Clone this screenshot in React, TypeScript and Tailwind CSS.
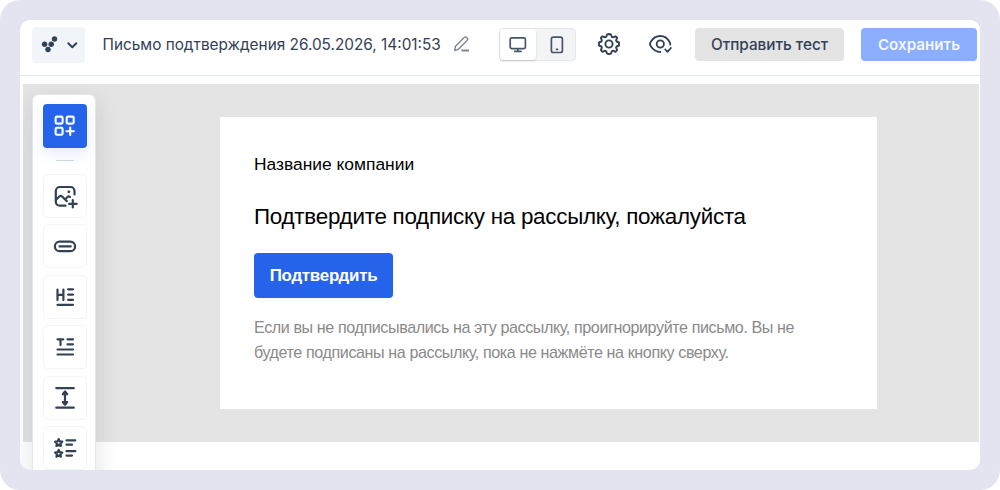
import type { ReactNode } from 'react'

interface ToolProps {
  label: string
  className?: string
  children: ReactNode
}

function Tool({ label, className = '', children }: ToolProps) {
  return (
    <button
      type="button"
      aria-label={label}
      className={`h-11 w-11 shrink-0 rounded-[5px] border border-[#f1f5f9] bg-white text-[#334155] ${className}`}
    >
      <svg
        viewBox="0.5 0.5 42 42"
        className="h-full w-full"
        fill="none"
        stroke="currentColor"
        strokeWidth="2.2"
        strokeLinecap="round"
        strokeLinejoin="round"
      >
        {children}
      </svg>
    </button>
  )
}

const star =
  'M0 -3.6 L1.1 -1.3 L3.6 -1 L1.8 0.8 L2.2 3.2 L0 2.1 L-2.2 3.2 L-1.8 0.8 L-3.6 -1 L-1.1 -1.3 Z'

function Sidebar() {
  return (
    <aside className="flex h-[400px] w-16 shrink-0 flex-col items-center rounded-t-[7px] border border-[#e2e8f0] bg-white pl-px pt-[9px] shadow-[0_8px_24px_rgba(15,23,42,0.12)]">
      <button
        type="button"
        aria-label="Блоки"
        className="h-11 w-11 shrink-0 rounded-[4px] bg-[#2563eb] text-white shadow-[0_6px_14px_rgba(37,99,235,0.12)]"
      >
        <svg
          viewBox="0 0 44 44"
          className="h-full w-full"
          fill="none"
          stroke="currentColor"
          strokeWidth="2.1"
          strokeLinecap="round"
        >
          <rect x="12.6" y="12.6" width="7" height="7" rx="1.4" />
          <rect x="23.7" y="12.6" width="7" height="7" rx="1.4" />
          <rect x="12.6" y="23.8" width="7" height="7" rx="1.4" />
          <path d="M27.2 23.6v7.4M23.5 27.3h7.4" />
        </svg>
      </button>
      <div className="mt-3 h-px w-[18px] shrink-0 bg-[#cbd5e1]" />

      <Tool label="Изображение" className="mt-[13px]">
        <path d="M31 20v-3.500a4 4 0 0 0-4-4H16.300a4 4 0 0 0-4 4v10.700a4 4 0 0 0 4 4H22" />
        <path d="M12.500 25.300l3.300-3.300a2 2 0 0 1 2.800 0l4.800 4.600M23 23.500l1-1a2 2 0 0 1 2.500-.2" />
        <path d="M25.300 17.300h.1" strokeWidth="2.800" />
        <path d="M29.300 25.500v7.500M25.500 29.300h7.700" />
      </Tool>
      <Tool label="Кнопка" className="mt-1.5">
        <rect x="11.400" y="17.200" width="20.200" height="9.400" rx="4.700" />
        <path d="M16 21.900h11.200" />
      </Tool>
      <Tool label="Заголовок" className="mt-[7px]">
        <path d="M14 14v10.600M19.900 14v10.600M14 19.300h5.900" />
        <path d="M24.600 13.800h4.900M24.600 19.100h4.900M24.600 24.300h4.900M14 29.300h15.500" />
      </Tool>
      <Tool label="Текст" className="mt-1.5">
        <path d="M14 13.800h5.800M17 13.800v5.800" />
        <path d="M24 13.800h5.500M24 18.800h5.500M14 24h15.500M14 29h15.500" />
      </Tool>
      <Tool label="Отступ" className="mt-[7px]">
        <path d="M12.800 11.700h17.500M12.800 31.200h17.500M21.500 16v11" />
        <path
          fill="currentColor"
          d="M21.500 15l-2.200 2.600h4.400zM21.500 28.200l-2.200-2.600h4.400z"
        />
      </Tool>
      <Tool label="Список" className="mt-1.5">
        <path transform="translate(15.200 16.200)" d={star} />
        <path transform="translate(15.200 27)" d={star} />
        <path d="M23 13.800h8.800M23 18.200h5.500M23 24.700h8.800M23 29.100h5.500" />
      </Tool>
    </aside>
  )
}

function Header() {
  return (
    <header className="flex h-14 items-start border-b border-[#e2e8f0] pl-3 pt-[7px] font-['Inter',sans-serif] text-[#334155]">
      <button
        type="button"
        aria-label="Меню"
        className="h-9 w-[53px] shrink-0 rounded-[4px] bg-[#f1f5f9]"
      >
        <svg viewBox="0 0 53 36" className="h-full w-full">
          <g fill="currentColor">
            <circle cx="12.600" cy="17.300" r="2.700" />
            <circle cx="19.200" cy="17.300" r="2.700" />
            <circle cx="22.500" cy="12" r="2.700" />
            <circle cx="16" cy="22.500" r="2.700" />
          </g>
          <path
            d="M36.300 16.300l4 3.900 4-3.900"
            fill="none"
            stroke="currentColor"
            strokeWidth="2"
            strokeLinecap="round"
            strokeLinejoin="round"
          />
        </svg>
      </button>

      <div className="ml-[17.5px] w-[351.5px] shrink-0 whitespace-nowrap pt-px text-[15.35px] leading-[34px]">
        Письмо подтверждения 26.05.2026, 14:01:53
      </div>
      <svg
        viewBox="0 0 16 16"
        className="mt-[9px] h-4 w-4 shrink-0 text-[#7d8694]"
        fill="none"
        stroke="currentColor"
        strokeWidth="1.4"
        strokeLinejoin="round"
      >
        <path d="M.8 14.600l.7-4.400 8.700-8.600a1.700 1.700 0 0 1 2.400 0l.5.5a1.700 1.700 0 0 1 0 2.400l-8.500 8.600z" />
        <path d="M7.500 14.500h7.500" strokeWidth="1.900" />
      </svg>

      <div className="ml-[29px] mt-px flex h-[33px] w-[77px] shrink-0 rounded-[4px] border border-[#e5e7eb] bg-[#f3f4f6]">
        <div className="flex w-9 items-center justify-center rounded-[3px] bg-white shadow-[0_1px_2px_rgba(0,0,0,0.18)]">
          <svg
            viewBox="0 0 18 18"
            className="h-[18px] w-[18px]"
            fill="none"
            stroke="#475569"
            strokeWidth="1.700"
            strokeLinecap="round"
            strokeLinejoin="round"
          >
            <rect x="1.200" y="1.900" width="15.200" height="10.700" rx="1.500" />
            <path d="M8.800 13v2.300M5.800 15.400h6.200" />
          </svg>
        </div>
        <div className="flex flex-1 items-center justify-center pl-[3px]">
          <svg
            viewBox="0 0 14 18"
            className="h-[18px] w-3.5"
            fill="none"
            stroke="#475569"
            strokeWidth="1.700"
            strokeLinecap="round"
          >
            <rect x="1.400" y="1.200" width="11" height="15.300" rx="2" />
            <path d="M6.500 13.400h1" />
          </svg>
        </div>
      </div>

      <svg
        viewBox="0 0 24 24"
        className="ml-[21px] mt-[5px] h-6 w-6 shrink-0"
        fill="none"
        stroke="currentColor"
        strokeWidth="1.900"
        strokeLinejoin="round"
      >
        <path d="M12 2l1.900.5.9 2.300 1.300.6 2.400-1.100 1.600 1.500-1 2.500.5 1.200 2.400 1V13.500l-2.400 1-.5 1.200 1 2.500-1.600 1.600-2.400-1.100-1.300.6-.9 2.300L12 22l-1.900-.4-.9-2.300-1.300-.6-2.400 1.100-1.600-1.600 1-2.500-.5-1.200-2.400-1V10.500l2.400-1 .5-1.200-1-2.500 1.600-1.500 2.400 1.100 1.300-.6.900-2.300z" />
        <circle cx="12" cy="12" r="3.600" />
      </svg>
      <svg
        viewBox="0 0 24 24"
        className="ml-[27px] mr-px mt-[5px] h-6 w-6 shrink-0"
        fill="none"
        stroke="currentColor"
        strokeWidth="1.800"
        strokeLinecap="round"
        strokeLinejoin="round"
      >
        <path d="M12.300 20c-4.600 0-7.400-2.500-9.500-5.700a4 4 0 0 1 0-4.600C4.900 6.300 7.700 4 12.300 4s7.200 2.300 9.200 5.700c.7 1.100.9 2 .7 3" />
        <circle cx="12.300" cy="12" r="3.600" />
        <path d="M17.300 17.500l2.200 2.300 3.400-3.800" />
      </svg>

      <button
        type="button"
        className="ml-[22px] mt-px h-[33px] w-[149px] shrink-0 whitespace-nowrap rounded-[4px] bg-[#e4e4e4] pt-px text-[15.3px] font-medium"
      >
        Отправить тест
      </button>
      <button
        type="button"
        className="ml-[17px] mt-px h-[33px] w-[116px] shrink-0 whitespace-nowrap rounded-[4px] bg-[#8caeff] pt-px text-[15.2px] font-semibold text-[#f3f7ff]"
      >
        Сохранить
      </button>
    </header>
  )
}

export default function App() {
  return (
    <div className="h-[490px] w-[1000px] overflow-hidden rounded-[20px] bg-[#e4e4f0] p-5">
      <div className="h-[450px] overflow-hidden rounded-[10px] bg-white">
        <Header />
        <main className="ml-[3px] mr-px mt-2 flex h-[358px] items-start bg-[#e4e4e4] pl-[9px] pt-[10px]">
          <Sidebar />
          <section className="ml-[124px] mt-[23px] h-[292px] w-[657px] bg-white pl-[34px] pt-[35px] font-['Liberation_Sans',sans-serif] text-black">
            <p className="text-[17.4px] leading-6">Название компании</p>
            <h1 className="mt-[25px] whitespace-nowrap text-[22.4px] leading-8 tracking-[-0.26px]">
              Подтвердите подписку на рассылку, пожалуйста
            </h1>
            <button
              type="button"
              className="mt-5 block h-[45px] w-[139px] rounded-[4px] bg-[#2563eb] text-[16.9px] font-bold tracking-[-0.25px] text-white"
            >
              Подтвердить
            </button>
            <p className="mt-[17px] whitespace-nowrap text-[16.1px] leading-[25px] tracking-[-0.4px] text-[#8a8a8a]">
              Если вы не подписывались на эту рассылку, проигнорируйте письмо. Вы не
              <br />
              будете подписаны на рассылку, пока не нажмёте на кнопку сверху.
            </p>
          </section>
        </main>
      </div>
    </div>
  )
}
